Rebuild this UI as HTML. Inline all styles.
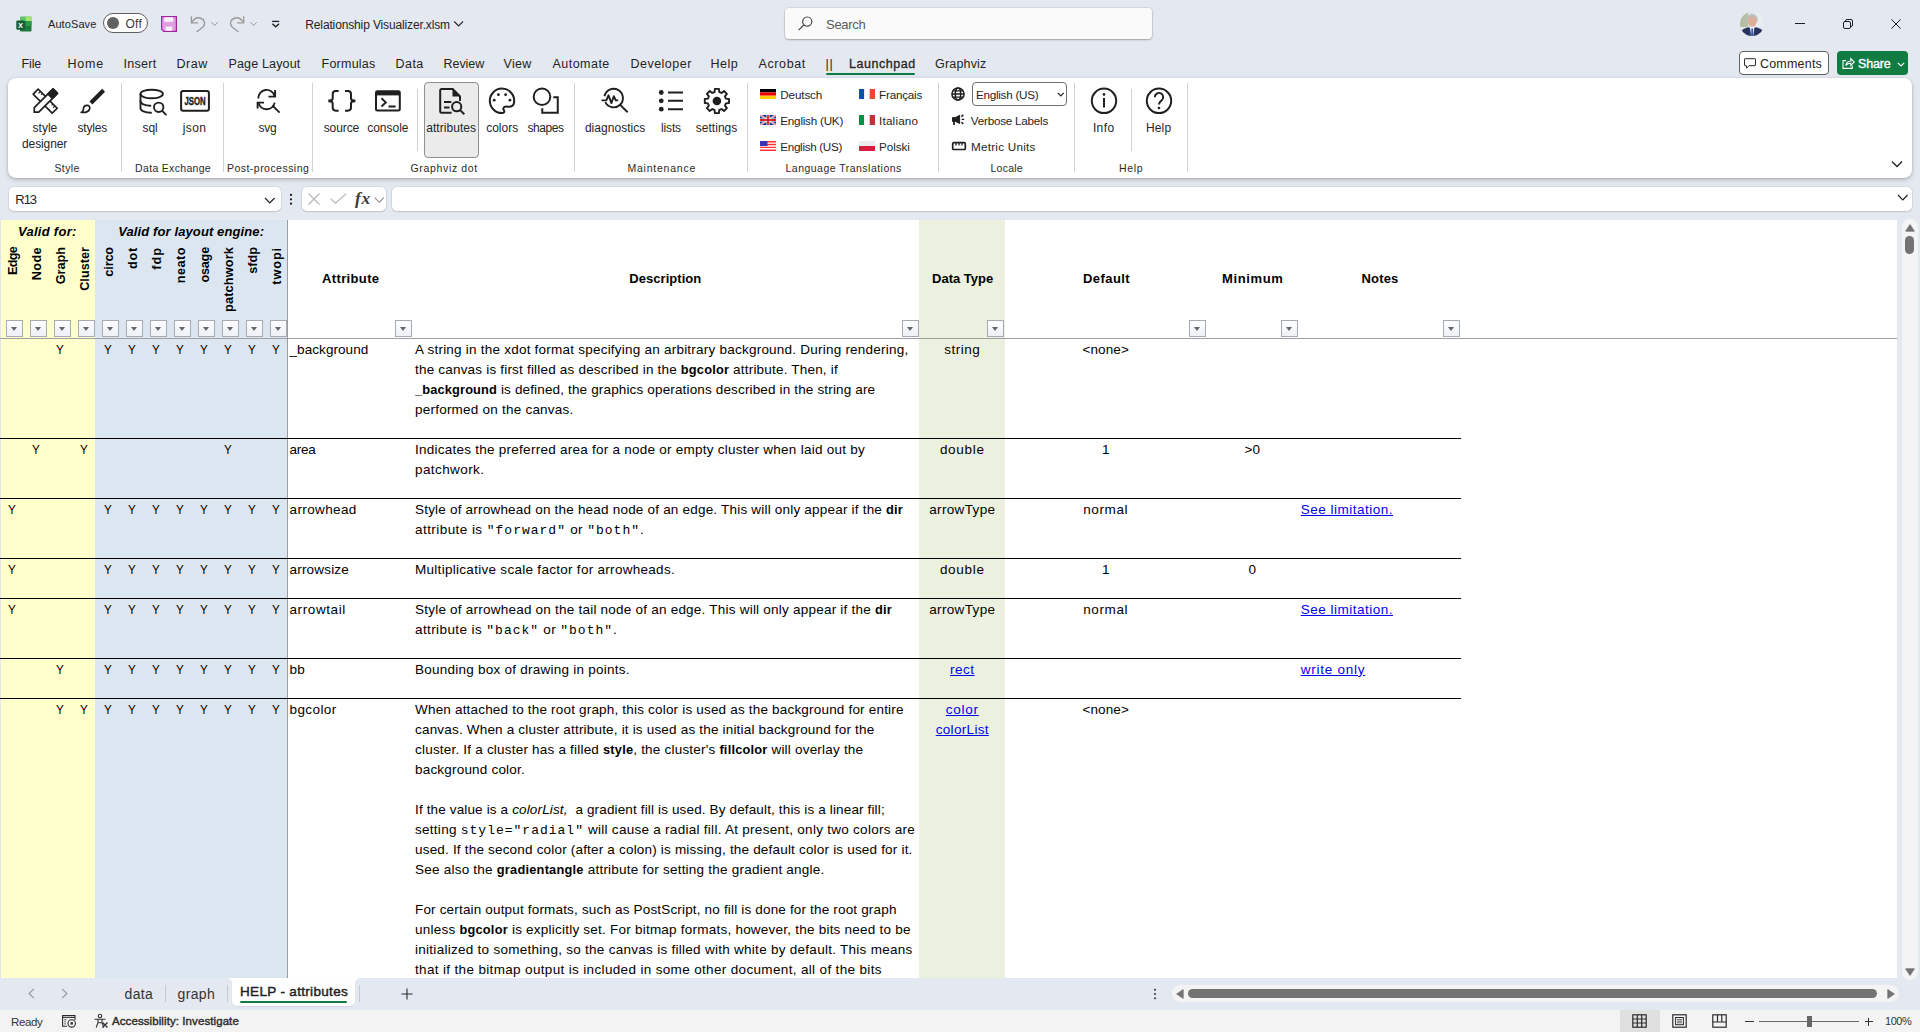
<!DOCTYPE html>
<html lang="en"><head>
<meta charset="utf-8">
<title>Relationship Visualizer.xlsm - Excel</title>
<style>
*{box-sizing:border-box;margin:0;padding:0}
html,body{width:1920px;height:1032px;overflow:hidden}
body{position:relative;background:#e4e8f0;font-family:"Liberation Sans",sans-serif;color:#242424;font-size:12px}
.a{position:absolute}
.t{position:absolute;white-space:nowrap;line-height:1;font-size:12px;color:#242424}
.c{text-align:center}
svg{position:absolute;overflow:visible}
/* ---------- ribbon ---------- */
#ribbon{left:8px;top:78px;width:1904px;height:100px;background:#fff;border-radius:8px;box-shadow:0 1px 3px rgba(0,0,0,.22),0 2px 6px rgba(0,0,0,.10)}
.sep{position:absolute;width:1px;background:#d2d2d2;top:83px;height:89px}
.seps{position:absolute;width:1px;background:#d2d2d2;top:89px;height:62px}
.rl{font-size:12px;color:#262626}
.gl{font-size:12px;color:#2a2a2a}
/* ---------- sheet ---------- */
#sheet{left:0;top:220px;width:1897px;height:758px;background:#fff;overflow:hidden}

.d{position:absolute;left:415px;white-space:nowrap;font-size:13.5px;line-height:20px;height:20px;color:#000}
.d b{font-size:12.800px}
.m{font-family:"Liberation Mono",monospace;font-size:13px;letter-spacing:1px}
.y{position:absolute;width:24px;text-align:center;transform:scaleX(.86);font-size:13.5px;line-height:20px;height:20px;color:#000}
.cc{position:absolute;text-align:center;font-size:13.5px;line-height:20px;height:20px;color:#000;white-space:nowrap}
.lk{color:#0000ee;text-decoration:underline}
.hl{position:absolute;left:0;width:1461px;height:1px;background:#000}
.fb{position:absolute;top:100px;width:17px;height:17px;border:1px solid #a4abb5;background:linear-gradient(#fff,#edf0f6)}
.fb:after{content:"";position:absolute;left:4px;top:5.800px;border-left:3.5px solid transparent;border-right:3.5px solid transparent;border-top:4px solid #666}
.vh{position:absolute;font-weight:bold;font-size:12.700px;line-height:1;white-space:nowrap;transform-origin:0 0;transform:rotate(-90deg);color:#000}
.hh{position:absolute;font-weight:bold;font-size:13px;line-height:20px;white-space:nowrap;text-align:center;color:#000}
</style>
</head>
<body>
<!-- ================= TITLE BAR ================= -->
<div id="titlebar" class="a" style="left:0;top:0;width:1920px;height:48px">
<!-- Excel logo -->
<svg style="left:16px;top:16px" width="16" height="16" viewBox="0 0 16 16">
  <path d="M5 0.5h9.5a1 1 0 0 1 1 1V5H4V1.5a1 1 0 0 1 1-1z" fill="#5cc467"></path>
  <rect x="9.6" y="0.5" width="5.9" height="4.5" rx="1" fill="#a6e36f"></rect>
  <path d="M4 5h11.5v9.5a1 1 0 0 1-1 1H5a1 1 0 0 1-1-1z" fill="#1e7a3c"></path>
  <rect x="9.6" y="5" width="5.9" height="5" fill="#2a9a4c"></rect>
  <rect x="0.3" y="4.6" width="8.6" height="9.2" rx="1.2" fill="#175c34"></rect>
  <text x="4.6" y="12" font-family="Liberation Sans, sans-serif" font-weight="bold" font-size="7.5" text-anchor="middle" fill="#fff">X</text>
</svg>
<span class="t" style="left: 48px; top: 18.7px; font-size: 11px; letter-spacing: 0.085px;">AutoSave</span>
<div class="a" style="left:103px;top:13px;width:45px;height:20px;border:1px solid #5f5f5f;border-radius:10px;background:#fff"></div>
<div class="a" style="left:107px;top:17px;width:12px;height:12px;border-radius:6px;background:#616161"></div>
<span class="t" style="left: 125.5px; top: 17.5px; font-size: 12px; color: rgb(58, 58, 58); letter-spacing: 0.251px;">Off</span>
<!-- save -->
<svg style="left:161px;top:16px" width="16" height="16" viewBox="0 0 16 16">
  <path d="M0.600 0.600h14.800v14.800H2.700L0.600 13.300z" fill="#dc9fe1" stroke="#a3239f" stroke-width="1.200"></path>
  <rect x="3.400" y="1.200" width="8.800" height="4.600" fill="#f6f2f7"></rect>
  <rect x="4.600" y="10.600" width="6.600" height="4.200" fill="#f6f2f7"></rect>
</svg>
<!-- undo -->
<svg style="left:190px;top:15px" width="30" height="18" viewBox="0 0 30 18" fill="none" stroke="#9a9a9a" stroke-width="1.300">
  <path d="M1.400 1.200v6.700h6.700"></path><path d="M1.700 7.600c2-3.600 5.400-5.400 8.400-4.600c4.600 1.200 5.800 6 2.800 9L6.600 17"></path>
  <path d="M21.400 7.200l3.200 3.200l3.200-3.200" stroke-width="1"></path>
</svg>
<!-- redo -->
<svg style="left:229px;top:15px" width="30" height="18" viewBox="0 0 30 18" fill="none" stroke="#9a9a9a" stroke-width="1.300">
  <path d="M14.700 1.200v6.700h-6.700"></path><path d="M14.400 7.600c-2-3.600-5.400-5.400-8.400-4.600c-4.600 1.200-5.800 6-2.800 9L9.500 17"></path>
  <path d="M21.400 7.200l3.200 3.200l3.200-3.200" stroke-width="1"></path>
</svg>
<!-- customize QAT -->
<svg style="left:270px;top:19px" width="11" height="10" viewBox="0 0 11 10" fill="none" stroke="#1f1f1f" stroke-width="1.300">
  <path d="M2.200 2.400h7"></path><path d="M2.400 4.700l3.300 3.100l3.300-3.100"></path>
</svg>
<span class="t" style="left: 305.3px; top: 19px; font-size: 12px; letter-spacing: -0.138px;">Relationship Visualizer.xlsm</span>
<svg style="left:453px;top:20px" width="12" height="8" viewBox="0 0 12 8" fill="none" stroke="#2b2b2b" stroke-width="1.2"><path d="M1.200 1.500l4.400 4.400l4.400-4.400"></path></svg>
<!-- search -->
<div class="a" style="left:785px;top:8px;width:367px;height:31px;background:#fafafa;border-radius:4px;box-shadow:0 0 0 1px rgba(0,0,0,.06),0 1px 2px rgba(0,0,0,.25)"></div>
<svg style="left:798px;top:16px" width="15" height="15" viewBox="0 0 15 15" fill="none" stroke="#4a4a4a" stroke-width="1.200"><circle cx="9.200" cy="5.600" r="4.600"></circle><path d="M5.800 9L0.600 14.200"></path></svg>
<span class="t" style="left: 826px; top: 17.5px; font-size: 13px; color: rgb(90, 90, 90); letter-spacing: -0.281px;">Search</span>
<!-- avatar -->
<svg style="left:1740px;top:12px" width="24" height="24" viewBox="0 0 24 24">
  <defs><clipPath id="avc"><circle cx="12" cy="12" r="12"></circle></clipPath></defs>
  <g clip-path="url(#avc)">
    <rect width="24" height="24" fill="#dfe4e8"></rect>
    <rect x="0" y="0" width="8" height="15" fill="#b4bfa6"></rect>
    <rect x="15" y="0" width="9" height="15" fill="#e9edf0"></rect>
    <ellipse cx="12.200" cy="7.300" rx="5.600" ry="5.400" fill="#bdbdbd"></ellipse>
    <ellipse cx="12.200" cy="9.600" rx="4.300" ry="5.200" fill="#dcae98"></ellipse>
    <path d="M-1 24C0 18.500 4 16 8.500 15.300L12.200 17L15.800 15.300C20.500 16 24 18.500 25 24Z" fill="#27335a"></path>
    <path d="M10 15.300L12.200 14.500L14.400 15.300L13.400 24H11Z" fill="#eef1f5"></path>
    <path d="M11.500 16.500H12.900L13.400 24H11Z" fill="#2f55b8"></path>
  </g>
</svg>
<!-- window controls -->
<div class="a" style="left:1795px;top:23px;width:10px;height:1px;background:#1f1f1f"></div>
<svg style="left:1843px;top:19px" width="10" height="10" viewBox="0 0 10 10" fill="none" stroke="#1f1f1f" stroke-width="1"><rect x="0.500" y="2.500" width="7" height="7" rx="1.500"></rect><path d="M2.500 2.300V2a1.500 1.500 0 0 1 1.500-1.500h4a1.500 1.500 0 0 1 1.500 1.500v4a1.500 1.500 0 0 1-1.500 1.500h-0.300"></path></svg>
<svg style="left:1891px;top:19px" width="10" height="10" viewBox="0 0 10 10" fill="none" stroke="#1f1f1f" stroke-width="1"><path d="M0.300 0.300l9.400 9.400M9.700 0.300L0.300 9.700"></path></svg>
</div>

<!-- ================= TABS ================= -->
<div id="tabs" class="a" style="left:0;top:48px;width:1920px;height:30px">
<span class="t" style="left: 21.5px; top: 9.5px; font-size: 12.5px; letter-spacing: -0.118px;">File</span>
<span class="t" style="left: 67.5px; top: 9.5px; font-size: 12.5px; letter-spacing: 0.815px;">Home</span>
<span class="t" style="left: 123.5px; top: 9.5px; font-size: 12.5px; letter-spacing: 0.305px;">Insert</span>
<span class="t" style="left: 176.5px; top: 9.5px; font-size: 12.5px; letter-spacing: 0.541px;">Draw</span>
<span class="t" style="left: 228.5px; top: 9.5px; font-size: 12.5px; letter-spacing: 0.16px;">Page Layout</span>
<span class="t" style="left: 321.5px; top: 9.5px; font-size: 12.5px; letter-spacing: 0.242px;">Formulas</span>
<span class="t" style="left: 395.5px; top: 9.5px; font-size: 12.5px; letter-spacing: 0.463px;">Data</span>
<span class="t" style="left: 443.5px; top: 9.5px; font-size: 12.5px; letter-spacing: -0.04px;">Review</span>
<span class="t" style="left: 503.5px; top: 9.5px; font-size: 12.5px; letter-spacing: 0.307px;">View</span>
<span class="t" style="left: 552.5px; top: 9.5px; font-size: 12.5px; letter-spacing: 0.471px;">Automate</span>
<span class="t" style="left: 630.5px; top: 9.5px; font-size: 12.5px; letter-spacing: 0.477px;">Developer</span>
<span class="t" style="left: 710.5px; top: 9.5px; font-size: 12.5px; letter-spacing: 0.531px;">Help</span>
<span class="t" style="left: 758.5px; top: 9.5px; font-size: 12.5px; letter-spacing: 0.619px;">Acrobat</span>
<span class="t" style="left: 825.5px; top: 9.5px; font-size: 12.5px; letter-spacing: 0.797px;">||</span>
<span class="t" style="left: 849px; top: 9.5px; font-size: 12.5px; -webkit-text-stroke: 0.3px rgb(36, 36, 36); letter-spacing: 0.553px;">Launchpad</span>
<span class="t" style="left: 935px; top: 9.5px; font-size: 12.5px; letter-spacing: 0.183px;">Graphviz</span>
<div class="a" style="left:826px;top:24.500px;width:89px;height:2.200px;border-radius:1.100px;background:#107c41"></div>

<!-- Comments -->
<div class="a" style="left:1739px;top:3px;width:90px;height:24px;background:#fff;border:1px solid #616161;border-radius:4px"></div>
<svg style="left:1744px;top:9.500px" width="12" height="11" viewBox="0 0 12 11" fill="none" stroke="#2b2b2b" stroke-width="1"><path d="M1 0.700h10a0.500 0.500 0 0 1 .5 .5v6a0.500 0.500 0 0 1-.5 .5H5L2.500 10.200V7.700H1a0.500 0.500 0 0 1-.5-.5v-6a0.500 0.500 0 0 1 .5-.5z"></path></svg>
<span class="t" style="left: 1760px; top: 9.5px; font-size: 12.5px; letter-spacing: 0.195px;">Comments</span>
<!-- Share -->
<div class="a" style="left:1837px;top:3px;width:71px;height:24px;background:#107c41;border-radius:4px"></div>
<svg style="left:1841.500px;top:8.500px" width="13" height="12" viewBox="0 0 13 12" fill="none" stroke="#fff" stroke-width="1.100"><path d="M4.200 3.600H1v7.800h9.200V8.400"></path><path d="M3.800 8.600c.4-2.800 2.200-4.400 5-4.600V1.500L12.200 5L8.800 8.400V6.100C6.600 6.100 5 6.900 3.800 8.600z"></path></svg>
<span class="t" style="left: 1858px; top: 9.5px; font-size: 12.5px; color: rgb(255, 255, 255); -webkit-text-stroke: 0.35px rgb(255, 255, 255); letter-spacing: -0.141px;">Share</span>
<svg style="left:1897px;top:13.500px" width="8" height="5" viewBox="0 0 8 5" fill="none" stroke="#fff" stroke-width="1.200"><path d="M0.800 0.800L4 4l3.200-3.200"></path></svg>
</div>

<div id="ribbon" class="a"></div>
<div id="ribbonc" class="a" style="left:0;top:0;width:1920px;height:180px">
<div class="a" style="left:424px;top:82px;width:55px;height:76px;background:#ebebeb;border:1px solid #8f8f8f;border-radius:4px"></div>
<svg style="left:32px;top:88px" width="26" height="26" viewBox="0 0 26 26">
<g transform="translate(13.200 13.200) scale(0.930) translate(-13 -13)"><g transform="rotate(45 13 13)" fill="none" stroke="#1f1f1f" stroke-width="1.8" stroke-linejoin="round">
<rect x="-1.5" y="9.200" width="29" height="7.600" fill="#fff"></rect>
<path d="M2 9.200v3M5 9.200v2M21 9.200v2M24 9.200v3" stroke-width="1.200"></path>
</g>
<g transform="rotate(-45 13 13)" stroke="#1f1f1f" stroke-width="1.8" stroke-linejoin="round">
<path d="M-0.300 9.600H28.400V16.400H-0.300L-3.700 13Z" fill="#fff"></path>
<path d="M20.500 9.600H27.400a1 1 0 0 1 1 1V15.400a1 1 0 0 1-1 1H20.500Z" fill="#1f1f1f"></path>
</g></g></svg>
<svg style="left:80px;top:88px" width="26" height="26" viewBox="0 0 26 26">
<path d="M23.600 2.300L10.900 15" stroke="#1f1f1f" stroke-width="4.200" fill="none"></path>
<path d="M3.400 21.400C3.400 18.800 5 17.300 7 17.300C9 17.300 10.100 18.900 9.700 20.700C9.100 23.400 6.600 24.700 1.200 24.400C2.800 23.600 3.400 22.800 3.400 21.400Z" fill="none" stroke="#1f1f1f" stroke-width="1.700" stroke-linejoin="round"></path></svg>
<svg style="left:138.6px;top:88.2px" width="30" height="28" viewBox="0 0 30 28">
<g fill="none" stroke="#1f1f1f" stroke-width="1.900" stroke-linecap="round">
<ellipse cx="12.700" cy="6" rx="11.200" ry="4.300"></ellipse>
<path d="M1.500 6V20.300C1.500 22.700 6 24.700 12 24.800"></path>
<path d="M1.500 13.300C1.500 15.700 5.800 17.500 11.400 17.700"></path>
<circle cx="19.700" cy="19.300" r="4.700"></circle>
<path d="M23.200 22.900L26.900 26.600"></path>
</g></svg>
<svg style="left:180px;top:90px" width="30" height="22" viewBox="0 0 30 22">
<rect x="1.100" y="1" width="27.800" height="19.800" rx="2" fill="none" stroke="#1f1f1f" stroke-width="2"></rect>
<text x="0" y="0" transform="translate(15 15.200) scale(0.720 1)" text-anchor="middle" font-family="Liberation Sans, sans-serif" font-weight="bold" font-size="10.800" fill="#1f1f1f" stroke="#1f1f1f" stroke-width="0.450">JSON</text></svg>
<svg style="left:256px;top:89px" width="26" height="26" viewBox="0 0 26 26">
<g fill="none" stroke="#1f1f1f" stroke-width="1.900">
<path d="M2.300 9.400A8.300 8.300 0 0 1 18.600 7"></path>
<path d="M19.100 1V7.600H12.500"></path>
<path d="M18.700 13.600A8.300 8.300 0 0 1 2.600 14.200"></path>
<path d="M1.600 19.600V13.600H8"></path>
<path d="M16.300 16.300L23.600 23.600"></path>
</g></svg>
<svg style="left:328px;top:89px" width="28" height="24" viewBox="0 0 28 24">
<g fill="none" stroke="#1f1f1f" stroke-width="2">
<path d="M10.700 2.100H7.800Q4.700 2.100 4.700 5.200V9.300Q4.700 11.900 1 11.900Q4.700 11.900 4.700 14.500V18.600Q4.700 21.700 7.800 21.700H10.700"></path>
<path d="M17 2.100H19.900Q23 2.100 23 5.200V9.300Q23 11.900 26.700 11.900Q23 11.900 23 14.500V18.600Q23 21.700 19.900 21.700H17"></path>
<path d="M0.300 11.900H3M24.700 11.900H27.400" stroke-width="2.600"></path>
</g></svg>
<svg style="left:375px;top:90px" width="26" height="22" viewBox="0 0 26 22">
<rect x="1" y="1.200" width="23.800" height="19.400" rx="1.500" fill="none" stroke="#1f1f1f" stroke-width="2"></rect>
<rect x="1" y="1.200" width="23.800" height="4.200" fill="#1f1f1f"></rect>
<path d="M6.500 8.300L10.800 12.400L6.500 16.500M13.500 16.500H20.600" fill="none" stroke="#1f1f1f" stroke-width="1.900"></path></svg>
<svg style="left:438px;top:87px" width="28" height="28" viewBox="0 0 28 28">
<g fill="none" stroke="#1f1f1f" stroke-width="2">
<path d="M22 14V9.300L14.700 2H3.500a1.300 1.300 0 0 0-1.300 1.300V24.400a1.300 1.300 0 0 0 1.300 1.300H13.600"></path>
<path d="M6 15H13.300M6 20.500H11.500" stroke-width="1.900"></path>
<circle cx="18.700" cy="19.700" r="4.600"></circle>
<path d="M22.100 23.100L26.300 27.300"></path>
</g>
<path d="M14.500 1.300L22.700 9.500H14.500Z" fill="#1f1f1f"></path></svg>
<svg style="left:488px;top:87px" width="28" height="28" viewBox="0 0 28 28">
<path d="M14 1.600A12.200 12.200 0 0 0 14 26C16.300 26 16.800 24.700 15.900 23.300C14.600 21.300 15.700 19.600 18 19.600C19.500 19.600 20.500 19.700 21.500 19.700C24.500 19.700 26.200 17.400 26.200 13.800A12.200 12.200 0 0 0 14 1.600Z" fill="none" stroke="#1f1f1f" stroke-width="2"></path>
<circle cx="10.400" cy="7.700" r="1.400" fill="#1f1f1f"></circle><circle cx="17.600" cy="7.700" r="1.400" fill="#1f1f1f"></circle>
<circle cx="6.200" cy="13.200" r="1.400" fill="#1f1f1f"></circle><circle cx="21.900" cy="13.200" r="1.400" fill="#1f1f1f"></circle></svg>
<svg style="left:532px;top:87px" width="28" height="28" viewBox="0 0 28 28">
<circle cx="10" cy="9.750" r="8.300" fill="none" stroke="#1f1f1f" stroke-width="2"></circle>
<path d="M21.300 10.250H25.750V25.750H10.250V21.300" fill="none" stroke="#1f1f1f" stroke-width="2"></path></svg>
<svg style="left:600px;top:87px" width="30" height="28" viewBox="0 0 30 28">
<g fill="none" stroke="#1f1f1f" stroke-width="1.900">
<path d="M4.500 9.300A9.300 9.300 0 1 1 5.300 15.200"></path>
<path d="M1.500 13.400H6.300L8.500 8.300L11.400 16.200L13.800 9.200L15.800 13.400H18.200" stroke-width="1.900" stroke-linejoin="round"></path>
<path d="M19.900 17.600L27.600 25.200"></path>
</g></svg>
<svg style="left:658px;top:89px" width="26" height="24" viewBox="0 0 26 24">
<circle cx="3.250" cy="3.500" r="2.400" fill="#1f1f1f"></circle><circle cx="3.250" cy="11.800" r="2.400" fill="#1f1f1f"></circle><circle cx="3.250" cy="20.200" r="2.400" fill="#1f1f1f"></circle>
<path d="M10 3.500H25M10 11.800H25M10 20.200H25" stroke="#1f1f1f" stroke-width="2" fill="none"></path></svg>
<svg style="left:703px;top:87px" width="28" height="28" viewBox="0 0 28 28">
<path d="M11.52 5.01 L11.88 1.87 L15.92 1.87 L16.28 5.01 L18.57 5.96 L21.05 3.99 L23.91 6.85 L21.94 9.33 L22.89 11.62 L26.03 11.98 L26.03 16.02 L22.89 16.38 L21.94 18.67 L23.91 21.15 L21.05 24.01 L18.57 22.04 L16.28 22.99 L15.92 26.13 L11.88 26.13 L11.52 22.99 L9.23 22.04 L6.75 24.01 L3.89 21.15 L5.86 18.67 L4.91 16.38 L1.77 16.02 L1.77 11.98 L4.91 11.62 L5.86 9.33 L3.89 6.85 L6.75 3.99 L9.23 5.96Z" fill="none" stroke="#1f1f1f" stroke-width="1.900" stroke-linejoin="round"></path>
<circle cx="13.900" cy="14" r="4.300" fill="#1f1f1f"></circle></svg>
<svg style="left:1090px;top:87px" width="28" height="28" viewBox="0 0 28 28">
<circle cx="14" cy="13.800" r="12.200" fill="none" stroke="#1f1f1f" stroke-width="2"></circle>
<circle cx="14" cy="7.400" r="1.400" fill="#1f1f1f"></circle><path d="M14 11V20.500" stroke="#1f1f1f" stroke-width="2"></path></svg>
<svg style="left:1145px;top:87px" width="28" height="28" viewBox="0 0 28 28">
<circle cx="14" cy="13.800" r="12.200" fill="none" stroke="#1f1f1f" stroke-width="2"></circle>
<path d="M9.800 10.200A4.200 4.200 0 1 1 16.400 13.600C14.700 14.800 14 15.600 14 17.500" fill="none" stroke="#1f1f1f" stroke-width="1.900"></path>
<circle cx="14" cy="21" r="1.300" fill="#1f1f1f"></circle></svg>
<svg style="left:951px;top:87px" width="14" height="14" viewBox="0 0 14 14">
<g fill="none" stroke="#1f1f1f" stroke-width="1.500"><circle cx="7" cy="7" r="6.100"></circle><ellipse cx="7" cy="7" rx="2.700" ry="6.100"></ellipse><path d="M1 7H13M2 3.800H12M2 10.200H12" stroke-width="1.300"></path></g></svg>
<svg style="left:951px;top:114px" width="16" height="12" viewBox="0 0 16 12">
<path d="M1.500 3.600H4.500L8.600 1.300V9.500L4.500 7.400H1.500Z" fill="#1f1f1f" stroke="#1f1f1f" stroke-width="1" stroke-linejoin="round"></path>
<path d="M3 7.500V11" stroke="#1f1f1f" stroke-width="1.800"></path>
<path d="M10.600 5.400H13.200M10.300 2.600L12.300 0.900M10.300 8.200L12.300 9.900" stroke="#1f1f1f" stroke-width="1.400" fill="none"></path></svg>
<svg style="left:951px;top:141px" width="16" height="10" viewBox="0 0 16 10">
<rect x="1.700" y="1.700" width="12.600" height="6.800" rx="1" fill="none" stroke="#1f1f1f" stroke-width="1.700"></rect>
<path d="M5 1.700V4.500M8 1.700V4.500M11 1.700V4.500" stroke="#1f1f1f" stroke-width="1.300"></path></svg>
<svg style="left:1891px;top:160px" width="12" height="8" viewBox="0 0 12 8"><path d="M1 1.500L6 6.500L11 1.500" fill="none" stroke="#1f1f1f" stroke-width="1.300"></path></svg>
<svg style="left:760px;top:89px" width="16" height="10" viewBox="0 0 16 10"><rect width="16" height="3.400" fill="#000"></rect><rect y="3.400" width="16" height="3.300" fill="#e00"></rect><rect y="6.700" width="16" height="3.300" fill="#fc0"></rect></svg>
<svg style="left:760px;top:115px" width="16" height="10" viewBox="0 0 16 10"><rect width="16" height="10" fill="#1f3a93"></rect><path d="M0 0L16 10M16 0L0 10" stroke="#fff" stroke-width="1.700"></path><path d="M0 0L16 10M16 0L0 10" stroke="#d33" stroke-width="0.600"></path><path d="M8 0V10M0 5H16" stroke="#fff" stroke-width="3"></path><path d="M8 0V10M0 5H16" stroke="#d9252a" stroke-width="1.800"></path></svg>
<svg style="left:760px;top:141px" width="16" height="10" viewBox="0 0 16 10"><rect width="16" height="10" fill="#fff"></rect><path d="M0 0.700H16M0 3.500H16M0 6.400H16M0 9.300H16" stroke="#f33" stroke-width="1.400"></path><rect width="7.500" height="5" fill="#3a35b5"></rect></svg>
<svg style="left:859px;top:89px" width="16" height="10" viewBox="0 0 16 10"><rect width="5.300" height="10" fill="#0a4fb3"></rect><rect x="5.300" width="5.400" height="10" fill="#fff"></rect><rect x="10.700" width="5.300" height="10" fill="#f0452f"></rect></svg>
<svg style="left:859px;top:115px" width="16" height="10" viewBox="0 0 16 10"><rect width="5.300" height="10" fill="#0a9148"></rect><rect x="5.300" width="5.400" height="10" fill="#fff"></rect><rect x="10.700" width="5.300" height="10" fill="#cc2b3a"></rect></svg>
<svg style="left:859px;top:141px" width="16" height="10" viewBox="0 0 16 10"><rect width="16" height="5" fill="#ececec"></rect><rect y="5" width="16" height="5" fill="#dc1c3f"></rect></svg>
<div class="sep" style="left:121px"></div>
<div class="sep" style="left:223px"></div>
<div class="sep" style="left:312px"></div>
<div class="sep" style="left:574px"></div>
<div class="sep" style="left:747px"></div>
<div class="sep" style="left:938px"></div>
<div class="sep" style="left:1074px"></div>
<div class="sep" style="left:1187px"></div>
<div class="seps" style="left:417px"></div>
<div class="seps" style="left:1131px"></div>
<div class="a" style="left:972px;top:82px;width:95px;height:24px;background:#fff;border:1px solid #6f6f6f;border-radius:4px"></div>
<svg style="left:1057px;top:92px" width="8" height="5" viewBox="0 0 8 5"><path d="M0.800 0.800L3.800 3.800L6.800 0.800" fill="none" stroke="#1f1f1f" stroke-width="1.200"></path></svg>
<span class="t rl" style="left: 32.5px; top: 121.6px; font-size: 12px; letter-spacing: 0.028px;">style</span>
<span class="t rl" style="left: 22px; top: 137.6px; font-size: 12px; letter-spacing: -0.106px;">designer</span>
<span class="t rl" style="left: 77.5px; top: 121.6px; font-size: 12px; letter-spacing: -0.176px;">styles</span>
<span class="t rl" style="left: 142.5px; top: 121.6px; font-size: 12px; letter-spacing: -0.125px;">sql</span>
<span class="t rl" style="left: 182.8px; top: 121.6px; font-size: 12px; letter-spacing: 0.358px;">json</span>
<span class="t rl" style="left: 258.5px; top: 121.6px; font-size: 12px; letter-spacing: -0.291px;">svg</span>
<span class="t rl" style="left: 323.7px; top: 121.6px; font-size: 12px; letter-spacing: -0.084px;">source</span>
<span class="t rl" style="left: 367.2px; top: 121.6px; font-size: 12px; letter-spacing: -0.012px;">console</span>
<span class="t rl" style="left: 426.2px; top: 121.6px; font-size: 12px; letter-spacing: 0.049px;">attributes</span>
<span class="t rl" style="left: 486.2px; top: 121.6px; font-size: 12px; letter-spacing: -0.005px;">colors</span>
<span class="t rl" style="left: 527.4px; top: 121.6px; font-size: 12px; letter-spacing: -0.399px;">shapes</span>
<span class="t rl" style="left: 584.9px; top: 121.6px; font-size: 12px; letter-spacing: 0.036px;">diagnostics</span>
<span class="t rl" style="left: 661px; top: 121.6px; font-size: 12px; letter-spacing: -0.144px;">lists</span>
<span class="t rl" style="left: 695.8px; top: 121.6px; font-size: 12px; letter-spacing: 0.02px;">settings</span>
<span class="t rl" style="left: 1092.9px; top: 121.6px; font-size: 12px; letter-spacing: 0.394px;">Info</span>
<span class="t rl" style="left: 1145.9px; top: 121.6px; font-size: 12px; letter-spacing: 0.172px;">Help</span>
<span class="t rl" style="left: 780.3px; top: 88.9px; font-size: 11.7px; letter-spacing: -0.147px;">Deutsch</span>
<span class="t rl" style="left: 780.3px; top: 114.9px; font-size: 11.7px; letter-spacing: -0.237px;">English (UK)</span>
<span class="t rl" style="left: 780.3px; top: 140.9px; font-size: 11.7px; letter-spacing: -0.328px;">English (US)</span>
<span class="t rl" style="left: 879.1px; top: 88.9px; font-size: 11.7px; letter-spacing: -0.233px;">Français</span>
<span class="t rl" style="left: 879.1px; top: 114.9px; font-size: 11.7px; letter-spacing: 0.173px;">Italiano</span>
<span class="t rl" style="left: 879.1px; top: 140.9px; font-size: 11.7px; letter-spacing: -0.078px;">Polski</span>
<span class="t rl" style="left: 976px; top: 89.4px; font-size: 11.7px; letter-spacing: -0.273px;">English (US)</span>
<span class="t rl" style="left: 970.8px; top: 114.9px; font-size: 11.7px; letter-spacing: -0.237px;">Verbose Labels</span>
<span class="t rl" style="left: 971px; top: 140.9px; font-size: 11.7px; letter-spacing: 0.236px;">Metric Units</span>
<span class="t gl" style="left: 54.5px; top: 162.8px; font-size: 10.5px; letter-spacing: 0.361px;">Style</span>
<span class="t gl" style="left: 135.1px; top: 162.8px; font-size: 10.5px; letter-spacing: 0.317px;">Data Exchange</span>
<span class="t gl" style="left: 227px; top: 162.8px; font-size: 10.5px; letter-spacing: 0.465px;">Post-processing</span>
<span class="t gl" style="left: 410.5px; top: 162.8px; font-size: 10.5px; letter-spacing: 0.66px;">Graphviz dot</span>
<span class="t gl" style="left: 627.5px; top: 162.8px; font-size: 10.5px; letter-spacing: 0.767px;">Maintenance</span>
<span class="t gl" style="left: 785.5px; top: 162.8px; font-size: 10.5px; letter-spacing: 0.478px;">Language Translations</span>
<span class="t gl" style="left: 990.5px; top: 162.8px; font-size: 10.5px; letter-spacing: 0.251px;">Locale</span>
<span class="t gl" style="left: 1119.1px; top: 162.8px; font-size: 10.5px; letter-spacing: 0.602px;">Help</span>
</div>
<div id="fbar" class="a" style="left:0;top:180px;width:1920px;height:40px">
<div class="a" style="left:8.500px;top:6.800px;width:272px;height:24.600px;background:#fff;border-radius:5px;box-shadow:0 0 0 1px rgba(0,0,0,.06),0 1px 1.500px rgba(0,0,0,.10)"></div>
<span class="t" style="left: 15.3px; top: 12.6px; font-size: 13px; letter-spacing: -1.03px;">R13</span>
<svg style="left:264px;top:17px" width="12" height="7" viewBox="0 0 12 7"><path d="M1 1L5.800 5.800L10.600 1" fill="none" stroke="#1f1f1f" stroke-width="1.200"></path></svg>
<svg style="left:289px;top:13px" width="4" height="13" viewBox="0 0 4 13"><circle cx="2" cy="1.900" r="1.150" fill="#222"></circle><circle cx="2" cy="6.300" r="1.150" fill="#222"></circle><circle cx="2" cy="10.700" r="1.150" fill="#222"></circle></svg>
<div class="a" style="left:301.500px;top:6.800px;width:84.500px;height:24.600px;background:#fff;border-radius:5px;box-shadow:0 0 0 1px rgba(0,0,0,.06),0 1px 1.500px rgba(0,0,0,.10)"></div>
<svg style="left:308px;top:12.700px" width="12" height="12" viewBox="0 0 12 12"><path d="M0.500 0.500L11.500 11.500M11.500 0.500L0.500 11.500" fill="none" stroke="#b4b4b4" stroke-width="1.100"></path></svg>
<svg style="left:330px;top:13px" width="17" height="11" viewBox="0 0 17 11"><path d="M0.600 5.600L5.400 10.200L16.300 0.700" fill="none" stroke="#b4b4b4" stroke-width="1.100"></path></svg>
<span class="t" style="left:355px;top:9.500px;font-family:'Liberation Serif',serif;font-style:italic;font-weight:bold;font-size:17.500px;color:#3c3c3c;letter-spacing:0.600px">fx</span>
<svg style="left:374.300px;top:16.800px" width="11" height="7" viewBox="0 0 11 7"><path d="M0.700 0.700L5.300 5.300L9.900 0.700" fill="none" stroke="#8a8a8a" stroke-width="1.100"></path></svg>
<div class="a" style="left:391.500px;top:6.800px;width:1520px;height:24.600px;background:#fff;border-radius:5px;box-shadow:0 0 0 1px rgba(0,0,0,.06),0 1px 1.500px rgba(0,0,0,.10)"></div>
<svg style="left:1897px;top:14.200px" width="12" height="7" viewBox="0 0 12 7"><path d="M1 1L5.800 5.800L10.600 1" fill="none" stroke="#1f1f1f" stroke-width="1.200"></path></svg>
</div>
<div id="sheet" class="a">
<div class="a" style="left:0;top:0;width:1px;height:758px;background:#e1e5ea"></div>
<div class="a" style="left:1px;top:0;width:94px;height:758px;background:#ffffcc"></div>
<div class="a" style="left:95px;top:0;width:192px;height:758px;background:#dce6f1"></div>
<div class="a" style="left:919px;top:0;width:86px;height:758px;background:#ebf1de"></div>
<div class="a" style="left:287px;top:0;width:1px;height:758px;background:#9c9c9c"></div>
<div class="a" style="left:0;top:118px;width:1897px;height:1px;background:#a0a0a0"></div>
<div class="hl" style="top:218px"></div>
<div class="hl" style="top:278px"></div>
<div class="hl" style="top:338px"></div>
<div class="hl" style="top:378px"></div>
<div class="hl" style="top:438px"></div>
<div class="hl" style="top:478px"></div>
<span class="t" style="left: 18px; top: 4.8px; font-size: 13px; font-weight: bold; font-style: italic; color: rgb(0, 0, 0); letter-spacing: 0.271px;">Valid for:</span>
<span class="t" style="left: 118.2px; top: 4.8px; font-size: 13px; font-weight: bold; font-style: italic; color: rgb(0, 0, 0); letter-spacing: 0.11px;">Valid for layout engine:</span>
<div class="vh" style="left:6.6px;top:127.200px;width:100px;text-align:right"><span style="letter-spacing: -0.743px;">Edge</span></div>
<div class="vh" style="left:30.6px;top:127.200px;width:100px;text-align:right"><span style="letter-spacing: 0.357px;">Node</span></div>
<div class="vh" style="left:54.6px;top:127.200px;width:100px;text-align:right"><span style="letter-spacing: -0.019px;">Graph</span></div>
<div class="vh" style="left:78.6px;top:127.200px;width:100px;text-align:right"><span style="letter-spacing: 0.014px;">Cluster</span></div>
<div class="vh" style="left:102.6px;top:127.200px;width:100px;text-align:right"><span style="letter-spacing: -0.132px;">circo</span></div>
<div class="vh" style="left:126.6px;top:127.200px;width:100px;text-align:right"><span style="letter-spacing: 0.782px;">dot</span></div>
<div class="vh" style="left:150.6px;top:127.200px;width:100px;text-align:right"><span style="letter-spacing: 1.032px;">fdp</span></div>
<div class="vh" style="left:174.6px;top:127.200px;width:100px;text-align:right"><span style="letter-spacing: 0.486px;">neato</span></div>
<div class="vh" style="left:198.6px;top:127.200px;width:100px;text-align:right"><span style="letter-spacing: -0.22px;">osage</span></div>
<div class="vh" style="left:222.6px;top:127.200px;width:100px;text-align:right"><span style="letter-spacing: 0.168px;">patchwork</span></div>
<div class="vh" style="left:246.6px;top:127.200px;width:100px;text-align:right"><span style="letter-spacing: 0.002px;">sfdp</span></div>
<div class="vh" style="left:270.6px;top:127.200px;width:100px;text-align:right"><span style="letter-spacing: 0.919px;">twopi</span></div>
<div class="fb" style="left:6px"></div>
<div class="fb" style="left:30px"></div>
<div class="fb" style="left:54px"></div>
<div class="fb" style="left:78px"></div>
<div class="fb" style="left:102px"></div>
<div class="fb" style="left:126px"></div>
<div class="fb" style="left:150px"></div>
<div class="fb" style="left:174px"></div>
<div class="fb" style="left:198px"></div>
<div class="fb" style="left:222px"></div>
<div class="fb" style="left:246px"></div>
<div class="fb" style="left:270px"></div>
<div class="fb" style="left:395px"></div>
<div class="fb" style="left:901.5px"></div>
<div class="fb" style="left:987px"></div>
<div class="fb" style="left:1189px"></div>
<div class="fb" style="left:1281px"></div>
<div class="fb" style="left:1443px"></div>
<span class="t" style="left: 322px; top: 52px; font-size: 13px; font-weight: bold; color: rgb(0, 0, 0); letter-spacing: 0.367px;">Attribute</span>
<span class="t" style="left: 629.3px; top: 52px; font-size: 13px; font-weight: bold; color: rgb(0, 0, 0); letter-spacing: 0.049px;">Description</span>
<span class="t" style="left: 932px; top: 52px; font-size: 13px; font-weight: bold; color: rgb(0, 0, 0); letter-spacing: 0.016px;">Data Type</span>
<span class="t" style="left: 1082.9px; top: 52px; font-size: 13px; font-weight: bold; color: rgb(0, 0, 0); letter-spacing: 0.456px;">Default</span>
<span class="t" style="left: 1222.1px; top: 52px; font-size: 13px; font-weight: bold; color: rgb(0, 0, 0); letter-spacing: 0.606px;">Minimum</span>
<span class="t" style="left: 1361.5px; top: 52px; font-size: 13px; font-weight: bold; color: rgb(0, 0, 0); letter-spacing: 0.169px;">Notes</span>
<span class="y" style="left:47.5px;top:119.7px">Y</span>
<span class="y" style="left:95.5px;top:119.7px">Y</span>
<span class="y" style="left:119.5px;top:119.7px">Y</span>
<span class="y" style="left:143.5px;top:119.7px">Y</span>
<span class="y" style="left:167.5px;top:119.7px">Y</span>
<span class="y" style="left:191.5px;top:119.7px">Y</span>
<span class="y" style="left:215.5px;top:119.7px">Y</span>
<span class="y" style="left:239.5px;top:119.7px">Y</span>
<span class="y" style="left:263.5px;top:119.7px">Y</span>
<span class="d" style="left: 289.5px; top: 119.7px; letter-spacing: 0.073px;">_background</span>
<span class="y" style="left:23.5px;top:219.7px">Y</span>
<span class="y" style="left:71.5px;top:219.7px">Y</span>
<span class="y" style="left:215.5px;top:219.7px">Y</span>
<span class="d" style="left: 289.5px; top: 219.7px; letter-spacing: -0.243px;">area</span>
<span class="y" style="left:-0.5px;top:279.7px">Y</span>
<span class="y" style="left:95.5px;top:279.7px">Y</span>
<span class="y" style="left:119.5px;top:279.7px">Y</span>
<span class="y" style="left:143.5px;top:279.7px">Y</span>
<span class="y" style="left:167.5px;top:279.7px">Y</span>
<span class="y" style="left:191.5px;top:279.7px">Y</span>
<span class="y" style="left:215.5px;top:279.7px">Y</span>
<span class="y" style="left:239.5px;top:279.7px">Y</span>
<span class="y" style="left:263.5px;top:279.7px">Y</span>
<span class="d" style="left: 289.5px; top: 279.7px; letter-spacing: 0.377px;">arrowhead</span>
<span class="y" style="left:-0.5px;top:339.7px">Y</span>
<span class="y" style="left:95.5px;top:339.7px">Y</span>
<span class="y" style="left:119.5px;top:339.7px">Y</span>
<span class="y" style="left:143.5px;top:339.7px">Y</span>
<span class="y" style="left:167.5px;top:339.7px">Y</span>
<span class="y" style="left:191.5px;top:339.7px">Y</span>
<span class="y" style="left:215.5px;top:339.7px">Y</span>
<span class="y" style="left:239.5px;top:339.7px">Y</span>
<span class="y" style="left:263.5px;top:339.7px">Y</span>
<span class="d" style="left: 289.5px; top: 339.7px; letter-spacing: 0.191px;">arrowsize</span>
<span class="y" style="left:-0.5px;top:379.7px">Y</span>
<span class="y" style="left:95.5px;top:379.7px">Y</span>
<span class="y" style="left:119.5px;top:379.7px">Y</span>
<span class="y" style="left:143.5px;top:379.7px">Y</span>
<span class="y" style="left:167.5px;top:379.7px">Y</span>
<span class="y" style="left:191.5px;top:379.7px">Y</span>
<span class="y" style="left:215.5px;top:379.7px">Y</span>
<span class="y" style="left:239.5px;top:379.7px">Y</span>
<span class="y" style="left:263.5px;top:379.7px">Y</span>
<span class="d" style="left: 289.5px; top: 379.7px; letter-spacing: 0.597px;">arrowtail</span>
<span class="y" style="left:47.5px;top:439.7px">Y</span>
<span class="y" style="left:95.5px;top:439.7px">Y</span>
<span class="y" style="left:119.5px;top:439.7px">Y</span>
<span class="y" style="left:143.5px;top:439.7px">Y</span>
<span class="y" style="left:167.5px;top:439.7px">Y</span>
<span class="y" style="left:191.5px;top:439.7px">Y</span>
<span class="y" style="left:215.5px;top:439.7px">Y</span>
<span class="y" style="left:239.5px;top:439.7px">Y</span>
<span class="y" style="left:263.5px;top:439.7px">Y</span>
<span class="d" style="left: 289.5px; top: 439.7px; letter-spacing: 0.281px;">bb</span>
<span class="y" style="left:47.5px;top:479.7px">Y</span>
<span class="y" style="left:71.5px;top:479.7px">Y</span>
<span class="y" style="left:95.5px;top:479.7px">Y</span>
<span class="y" style="left:119.5px;top:479.7px">Y</span>
<span class="y" style="left:143.5px;top:479.7px">Y</span>
<span class="y" style="left:167.5px;top:479.7px">Y</span>
<span class="y" style="left:191.5px;top:479.7px">Y</span>
<span class="y" style="left:215.5px;top:479.7px">Y</span>
<span class="y" style="left:239.5px;top:479.7px">Y</span>
<span class="y" style="left:263.5px;top:479.7px">Y</span>
<span class="d" style="left: 289.5px; top: 479.7px; letter-spacing: 0.42px;">bgcolor</span>
<span class="d" style="top: 119.7px; letter-spacing: 0.228px;">A string in the xdot format specifying an arbitrary background. During rendering,</span>
<span class="d" style="top: 139.7px; letter-spacing: 0.196px;">the canvas is first filled as described in the <b>bgcolor</b> attribute. Then, if</span>
<span class="d" style="top: 159.7px; letter-spacing: 0.152px;"><b>_background</b> is defined, the graphics operations described in the string are</span>
<span class="d" style="top: 179.7px; letter-spacing: 0.226px;">performed on the canvas.</span>
<span class="d" style="top: 219.7px; letter-spacing: 0.253px;">Indicates the preferred area for a node or empty cluster when laid out by</span>
<span class="d" style="top: 239.7px; letter-spacing: 0.412px;">patchwork.</span>
<span class="d" style="top: 279.7px; letter-spacing: 0.204px;">Style of arrowhead on the head node of an edge. This will only appear if the <b>dir</b></span>
<span class="d" style="top: 299.7px; letter-spacing: 0.438px;">attribute is <span class="m">"forward"</span> or <span class="m">"both"</span>.</span>
<span class="d" style="top: 339.7px; letter-spacing: 0.288px;">Multiplicative scale factor for arrowheads.</span>
<span class="d" style="top: 379.7px; letter-spacing: 0.226px;">Style of arrowhead on the tail node of an edge. This will only appear if the <b>dir</b></span>
<span class="d" style="top: 399.7px; letter-spacing: 0.404px;">attribute is <span class="m">"back"</span> or <span class="m">"both"</span>.</span>
<span class="d" style="top: 439.7px; letter-spacing: 0.249px;">Bounding box of drawing in points.</span>
<span class="d" style="top: 479.7px; letter-spacing: 0.189px;">When attached to the root graph, this color is used as the background for entire</span>
<span class="d" style="top: 499.7px; letter-spacing: 0.185px;">canvas. When a cluster attribute, it is used as the initial background for the</span>
<span class="d" style="top: 519.7px; letter-spacing: 0.206px;">cluster. If a cluster has a filled <b>style</b>, the cluster's <b>fillcolor</b> will overlay the</span>
<span class="d" style="top: 539.7px; letter-spacing: 0.195px;">background color.</span>
<span class="d" style="top: 579.7px; letter-spacing: 0.144px;">If the value is a <i>colorList,</i>&nbsp; a gradient fill is used. By default, this is a linear fill;</span>
<span class="d" style="top: 599.7px; letter-spacing: 0.276px;">setting <span class="m">style="radial"</span> will cause a radial fill. At present, only two colors are</span>
<span class="d" style="top: 619.7px; letter-spacing: 0.19px;">used. If the second color (after a colon) is missing, the default color is used for it.</span>
<span class="d" style="top: 639.7px; letter-spacing: 0.23px;">See also the <b>gradientangle</b> attribute for setting the gradient angle.</span>
<span class="d" style="top: 679.7px; letter-spacing: 0.172px;">For certain output formats, such as PostScript, no fill is done for the root graph</span>
<span class="d" style="top: 699.7px; letter-spacing: 0.229px;">unless <b>bgcolor</b> is explicitly set. For bitmap formats, however, the bits need to be</span>
<span class="d" style="top: 719.7px; letter-spacing: 0.275px;">initialized to something, so the canvas is filled with white by default. This means</span>
<span class="d" style="top: 739.7px; letter-spacing: 0.342px;">that if the bitmap output is included in some other document, all of the bits</span>
<div class="cc" style="left:902.3px;width:120px;top:119.7px"><span style="letter-spacing: 0.495px;">string</span></div>
<div class="cc" style="left:902.3px;width:120px;top:219.7px"><span style="letter-spacing: 0.709px;">double</span></div>
<div class="cc" style="left:902.3px;width:120px;top:279.7px"><span style="letter-spacing: 0.346px;">arrowType</span></div>
<div class="cc" style="left:902.3px;width:120px;top:339.7px"><span style="letter-spacing: 0.709px;">double</span></div>
<div class="cc" style="left:902.3px;width:120px;top:379.7px"><span style="letter-spacing: 0.346px;">arrowType</span></div>
<div class="cc" style="left:902.3px;width:120px;top:439.7px"><span class="lk" style="letter-spacing: 0.527px;">rect</span></div>
<div class="cc" style="left:902.3px;width:120px;top:479.7px"><span class="lk" style="letter-spacing: 0.759px;">color</span></div>
<div class="cc" style="left:902.3px;width:120px;top:499.7px"><span class="lk" style="letter-spacing: 0.315px;">colorList</span></div>
<div class="cc" style="left:1045.7px;width:120px;top:119.7px"><span style="letter-spacing: 0.119px;">&lt;none&gt;</span></div>
<div class="cc" style="left:1045.7px;width:120px;top:219.7px"><span>1</span></div>
<div class="cc" style="left:1045.7px;width:120px;top:279.7px"><span style="letter-spacing: 0.603px;">normal</span></div>
<div class="cc" style="left:1045.7px;width:120px;top:339.7px"><span>1</span></div>
<div class="cc" style="left:1045.7px;width:120px;top:379.7px"><span style="letter-spacing: 0.603px;">normal</span></div>
<div class="cc" style="left:1045.7px;width:120px;top:479.7px"><span style="letter-spacing: 0.119px;">&lt;none&gt;</span></div>
<div class="cc" style="left:1192.3px;width:120px;top:219.7px"><span>&gt;0</span></div>
<div class="cc" style="left:1192.3px;width:120px;top:339.7px"><span>0</span></div>
<span class="cc lk" style="left: 1300.7px; top: 279.7px; letter-spacing: 0.5px;">See limitation.</span>
<span class="cc lk" style="left: 1300.7px; top: 379.7px; letter-spacing: 0.5px;">See limitation.</span>
<span class="cc lk" style="left: 1300.7px; top: 439.7px; letter-spacing: 0.752px;">write only</span>
</div>
<div id="bottom" class="a" style="left:0;top:0;width:1920px;height:1032px">
<div class="a" style="left:1901.500px;top:219px;width:16.500px;height:761px;border-radius:8.250px;background:#f4f4f4"></div>
<svg style="left:1905px;top:224px" width="10" height="8" viewBox="0 0 10 8"><path d="M5 0.600L9.400 7.200H0.600Z" fill="#737373" stroke="#737373" stroke-width="0.800" stroke-linejoin="round"></path></svg>
<div class="a" style="left:1905.100px;top:236px;width:8.800px;height:17.500px;border-radius:4.400px;background:#737373"></div>
<svg style="left:1905px;top:967.500px" width="10" height="8" viewBox="0 0 10 8"><path d="M5 7.400L9.400 0.800H0.600Z" fill="#737373" stroke="#737373" stroke-width="0.800" stroke-linejoin="round"></path></svg>
<div class="a" style="left:1172px;top:985px;width:727px;height:17px;border-radius:8.500px;background:#f4f4f4"></div>
<svg style="left:1176px;top:988.500px" width="8" height="10" viewBox="0 0 8 10"><path d="M0.600 5L7.200 0.600V9.400Z" fill="#737373" stroke="#737373" stroke-width="0.800" stroke-linejoin="round"></path></svg>
<div class="a" style="left:1188px;top:989px;width:689px;height:9px;border-radius:4.500px;background:#737373"></div>
<svg style="left:1887px;top:988.500px" width="8" height="10" viewBox="0 0 8 10"><path d="M7.400 5L0.800 0.600V9.400Z" fill="#737373" stroke="#737373" stroke-width="0.800" stroke-linejoin="round"></path></svg>
<svg style="left:1153px;top:988px" width="4" height="12" viewBox="0 0 4 12"><circle cx="2" cy="1.800" r="1" fill="#333"></circle><circle cx="2" cy="6" r="1" fill="#333"></circle><circle cx="2" cy="10.200" r="1" fill="#333"></circle></svg>
<svg style="left:28px;top:988px" width="7" height="11" viewBox="0 0 7 11"><path d="M5.800 0.800L1.200 5.500L5.800 10.200" fill="none" stroke="#9a9a9a" stroke-width="1.200"></path></svg>
<svg style="left:61px;top:988px" width="7" height="11" viewBox="0 0 7 11"><path d="M1.200 0.800L5.800 5.500L1.200 10.200" fill="none" stroke="#9a9a9a" stroke-width="1.200"></path></svg>
<span class="t" style="left: 124.5px; top: 986.8px; font-size: 14px; color: rgb(51, 51, 51); letter-spacing: 0.348px;">data</span>
<div class="a" style="left:165px;top:985px;width:1px;height:17px;background:#c9c9c9"></div>
<span class="t" style="left: 177.5px; top: 986.8px; font-size: 14px; color: rgb(51, 51, 51); letter-spacing: 0.372px;">graph</span>
<div class="a" style="left:227px;top:985px;width:1px;height:17px;background:#c9c9c9"></div>
<div class="a" style="left:231.500px;top:978px;width:123.500px;height:28px;background:#fff;border-radius:0 0 5px 5px;box-shadow:0 0.500px 1px rgba(0,0,0,.08)"></div>
<div class="a" style="left:226.500px;top:978px;width:5px;height:5px;background:radial-gradient(circle at 0 100%,#e4e8f0 4.600px,#fff 5.200px)"></div>
<div class="a" style="left:355px;top:978px;width:5px;height:5px;background:radial-gradient(circle at 100% 100%,#e4e8f0 4.600px,#fff 5.200px)"></div>
<span class="t" style="left: 240px; top: 984.5px; font-size: 13.5px; color: rgb(31, 31, 31); -webkit-text-stroke: 0.45px rgb(31, 31, 31); letter-spacing: 0.327px;">HELP - attributes</span>
<div class="a" style="left:240px;top:1000.500px;width:107px;height:2px;border-radius:1px;background:#107c41"></div>
<div class="a" style="left:359px;top:985px;width:1px;height:17px;background:#c9c9c9"></div>
<svg style="left:401px;top:988px" width="12" height="12" viewBox="0 0 12 12"><path d="M6 0.500V11.500M0.500 6H11.500" fill="none" stroke="#2b2b2b" stroke-width="1.100"></path></svg>
<div class="a" style="left:0;top:1010px;width:1920px;height:22px;background:#f3f3f3"></div>
<span class="t" style="left: 11px; top: 1016.8px; font-size: 11.5px; color: rgb(51, 51, 51); letter-spacing: -0.362px;">Ready</span>
<svg style="left:62px;top:1015px" width="15" height="14" viewBox="0 0 15 14" fill="none" stroke="#2b2b2b" stroke-width="1.100"><path d="M13 5V0.600H0.600V11.200H5"></path><path d="M0.600 2.500H13M2.300 4.700H4.400M2.300 6.800H3.800M2.300 8.900H3.800" stroke-width="0.900"></path><circle cx="9.700" cy="8.400" r="3.700"></circle><rect x="8.500" y="7.200" width="2.400" height="2.400" fill="#2b2b2b" stroke="none"></rect></svg>
<svg style="left:93px;top:1013px" width="16" height="16" viewBox="0 0 16 16" fill="none" stroke="#333" stroke-width="1.100"><circle cx="7" cy="3" r="1.700"></circle><path d="M1.500 6.200H12.500M5 6.200V9.500L3.200 14.500M9 6.200V9.500L10.800 14.500M5 9.800H9"></path><path d="M9.500 9.500L14.500 14.500M14.500 9.500L9.500 14.500" stroke-width="1.300"></path></svg>
<span class="t" style="left: 112px; top: 1016px; font-size: 11.5px; color: rgb(43, 43, 43); -webkit-text-stroke: 0.4px rgb(43, 43, 43); letter-spacing: 0.086px;">Accessibility: Investigate</span>
<div class="a" style="left:1620px;top:1010px;width:40px;height:22px;background:#e0e0e0"></div>
<svg style="left:1632px;top:1014px" width="15" height="14" viewBox="0 0 15 14" fill="none" stroke="#2b2b2b" stroke-width="1.200"><rect x="0.800" y="0.800" width="13.400" height="12.400"></rect><path d="M0.800 5H14.200M0.800 9H14.200M5.300 0.800V13.200M9.700 0.800V13.200"></path></svg>
<svg style="left:1672px;top:1014px" width="15" height="14" viewBox="0 0 15 14" fill="none" stroke="#2b2b2b" stroke-width="1.200"><rect x="0.800" y="0.800" width="13.400" height="12.400"></rect><rect x="3.600" y="3.500" width="7.800" height="7.200" stroke-width="1"></rect><path d="M5 5.600H10M5 7.200H10M5 8.800H10" stroke-width="0.700"></path></svg>
<svg style="left:1712px;top:1014px" width="15" height="14" viewBox="0 0 15 14" fill="none" stroke="#2b2b2b" stroke-width="1.200"><rect x="0.800" y="0.800" width="13.400" height="12.400"></rect><path d="M0.800 8H14.200M5.500 0.800V8M9.800 0.800V8"></path></svg>
<div class="a" style="left:1745px;top:1021px;width:9px;height:1px;background:#333"></div>
<div class="a" style="left:1759px;top:1021px;width:100px;height:1px;background:#6a6a6a"></div>
<div class="a" style="left:1807px;top:1016px;width:5px;height:10.500px;background:#666"></div>
<div class="a" style="left:1864.500px;top:1021px;width:8px;height:1px;background:#333"></div>
<div class="a" style="left:1868px;top:1017.500px;width:1px;height:8px;background:#333"></div>
<span class="t" style="left: 1885px; top: 1016.3px; font-size: 11px; color: rgb(51, 51, 51); letter-spacing: -0.448px;">100%</span>
</div>


</body></html>
